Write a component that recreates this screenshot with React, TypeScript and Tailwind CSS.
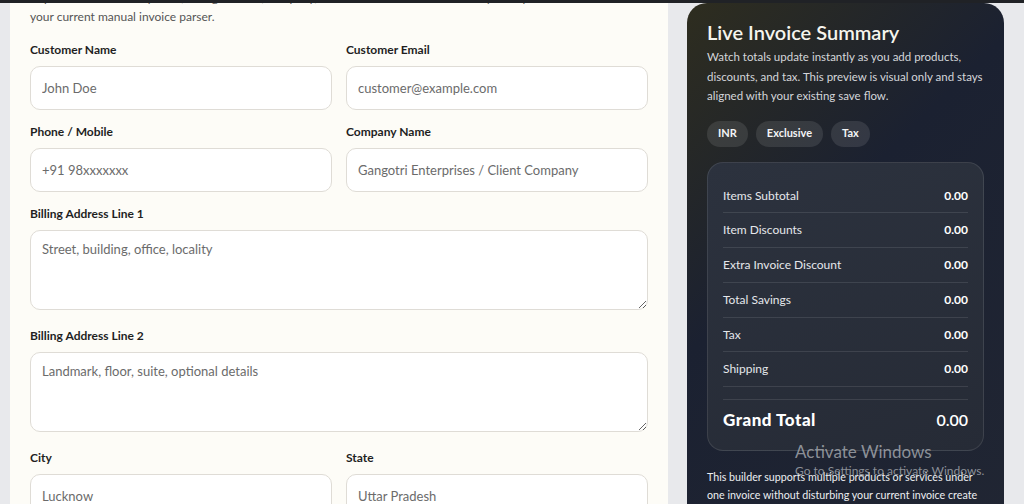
const fields = [
  { label: "Customer Name", placeholder: "John Doe" },
  { label: "Customer Email", placeholder: "customer@example.com" },
  { label: "Phone / Mobile", placeholder: "+91 98xxxxxxx" },
  { label: "Company Name", placeholder: "Gangotri Enterprises / Client Company" },
];

const summaryRows = [
  "Items Subtotal",
  "Item Discounts",
  "Extra Invoice Discount",
  "Total Savings",
  "Tax",
  "Shipping",
];

function Field({ label, placeholder }: { label: string; placeholder: string }) {
  return (
    <div className="flex flex-col">
      <label className="text-[12px] font-bold leading-4 text-[#1f1f1f] mb-2">{label}</label>
      <input
        placeholder={placeholder}
        className="h-[44px] w-full rounded-[10px] border border-[#dfdcd6] bg-white px-[11px] text-[13px] placeholder:text-[#6b6b6b] focus:outline-none"
      />
    </div>
  );
}

function AreaField({ label, placeholder }: { label: string; placeholder: string }) {
  return (
    <div className="flex flex-col col-span-2">
      <label className="text-[12px] font-bold leading-4 text-[#1f1f1f] mb-2">{label}</label>
      <textarea
        placeholder={placeholder}
        className="mb-[4px] block h-[80px] w-full rounded-[10px] border border-[#dfdcd6] bg-white px-[11px] pt-[9px] text-[13px] leading-[18px] placeholder:text-[#6b6b6b] focus:outline-none"
      />
    </div>
  );
}

export default function App() {
  return (
    <div className="relative h-[504px] w-[1024px] overflow-hidden bg-[#e8e9ec] font-['Lato','Noto_Sans',sans-serif]">
      <div className="absolute inset-x-0 top-0 z-10 h-[3px] bg-[#202226]" />

      <div className="flex gap-[19px] pl-[10px] pr-[20px]">
        {/* Customer form */}
        <div className="-mt-[12px] w-[658px] shrink-0 bg-[#fdfcf7] px-5 pb-10">
          <p className="text-[12px] leading-[19px] text-[#555]">
            Capture the customer profile, billing address, company, and contact details below. It stays compatible with
            <br />
            your current manual invoice parser.
          </p>

          <div className="mt-4 grid grid-cols-2 gap-[14px]">
            {fields.map((f) => (
              <Field key={f.label} {...f} />
            ))}
            <AreaField label="Billing Address Line 1" placeholder="Street, building, office, locality" />
            <AreaField label="Billing Address Line 2" placeholder="Landmark, floor, suite, optional details" />
            <Field label="City" placeholder="Lucknow" />
            <Field label="State" placeholder="Uttar Pradesh" />
          </div>
        </div>

        {/* Live summary */}
        <div className="mt-[3px] w-[317px] shrink-0 rounded-[20px] bg-[linear-gradient(135deg,#2e2d1f_0%,#1b2131_40%,#212633_100%)] px-5 pt-[16px] pb-10 text-white">
          <h2 className="text-[20px] font-semibold leading-[26px] text-[#f6f5ee]">Live Invoice Summary</h2>
          <p className="mt-[2px] text-[11.5px] leading-[19.5px] text-[#d4d6da]">
            Watch totals update instantly as you add products, discounts, and tax. This preview is visual only and stays
            aligned with your existing save flow.
          </p>

          <div className="mt-[15px] flex gap-2">
            {["INR", "Exclusive", "Tax"].map((c) => (
              <span
                key={c}
                className="flex h-[26px] items-center rounded-full bg-white/10 px-[11px] text-[11px] font-bold text-[#f3f4f6]"
              >
                {c}
              </span>
            ))}
          </div>

          <div className="mt-[15px] rounded-[16px] border border-white/10 bg-[linear-gradient(160deg,#2c323e,#262b36)] px-[15px] pt-[16px] pb-[20px]">
            {summaryRows.map((r) => (
              <div
                key={r}
                className="flex items-center justify-between border-b border-white/10 py-[9px] text-[12px] leading-[15.8px]"
              >
                <span className="text-[#e5e7eb]">{r}</span>
                <span className="font-bold text-white">0.00</span>
              </div>
            ))}
            <div className="mt-[12px] flex items-center justify-between border-t border-white/10 pt-[10px] text-[16px] leading-5">
              <span className="text-[17px] font-black tracking-[0.5px] text-white">Grand Total</span>
              <span className="font-semibold text-white">0.00</span>
            </div>
          </div>

          <p className="mt-[17px] text-[10.7px] leading-[18px] text-[#eceef1]">
            This builder supports multiple products or services under one invoice without disturbing your current invoice
            create flow.
          </p>
        </div>
      </div>

      {/* OS watermark */}
      <div className="pointer-events-none absolute left-[795px] top-[441px] z-20 text-[#a9adb3]/80">
        <div className="text-[17px] leading-[22px]">Activate Windows</div>
        <div className="text-[12px] leading-[16px]">Go to Settings to activate Windows.</div>
      </div>
    </div>
  );
}
